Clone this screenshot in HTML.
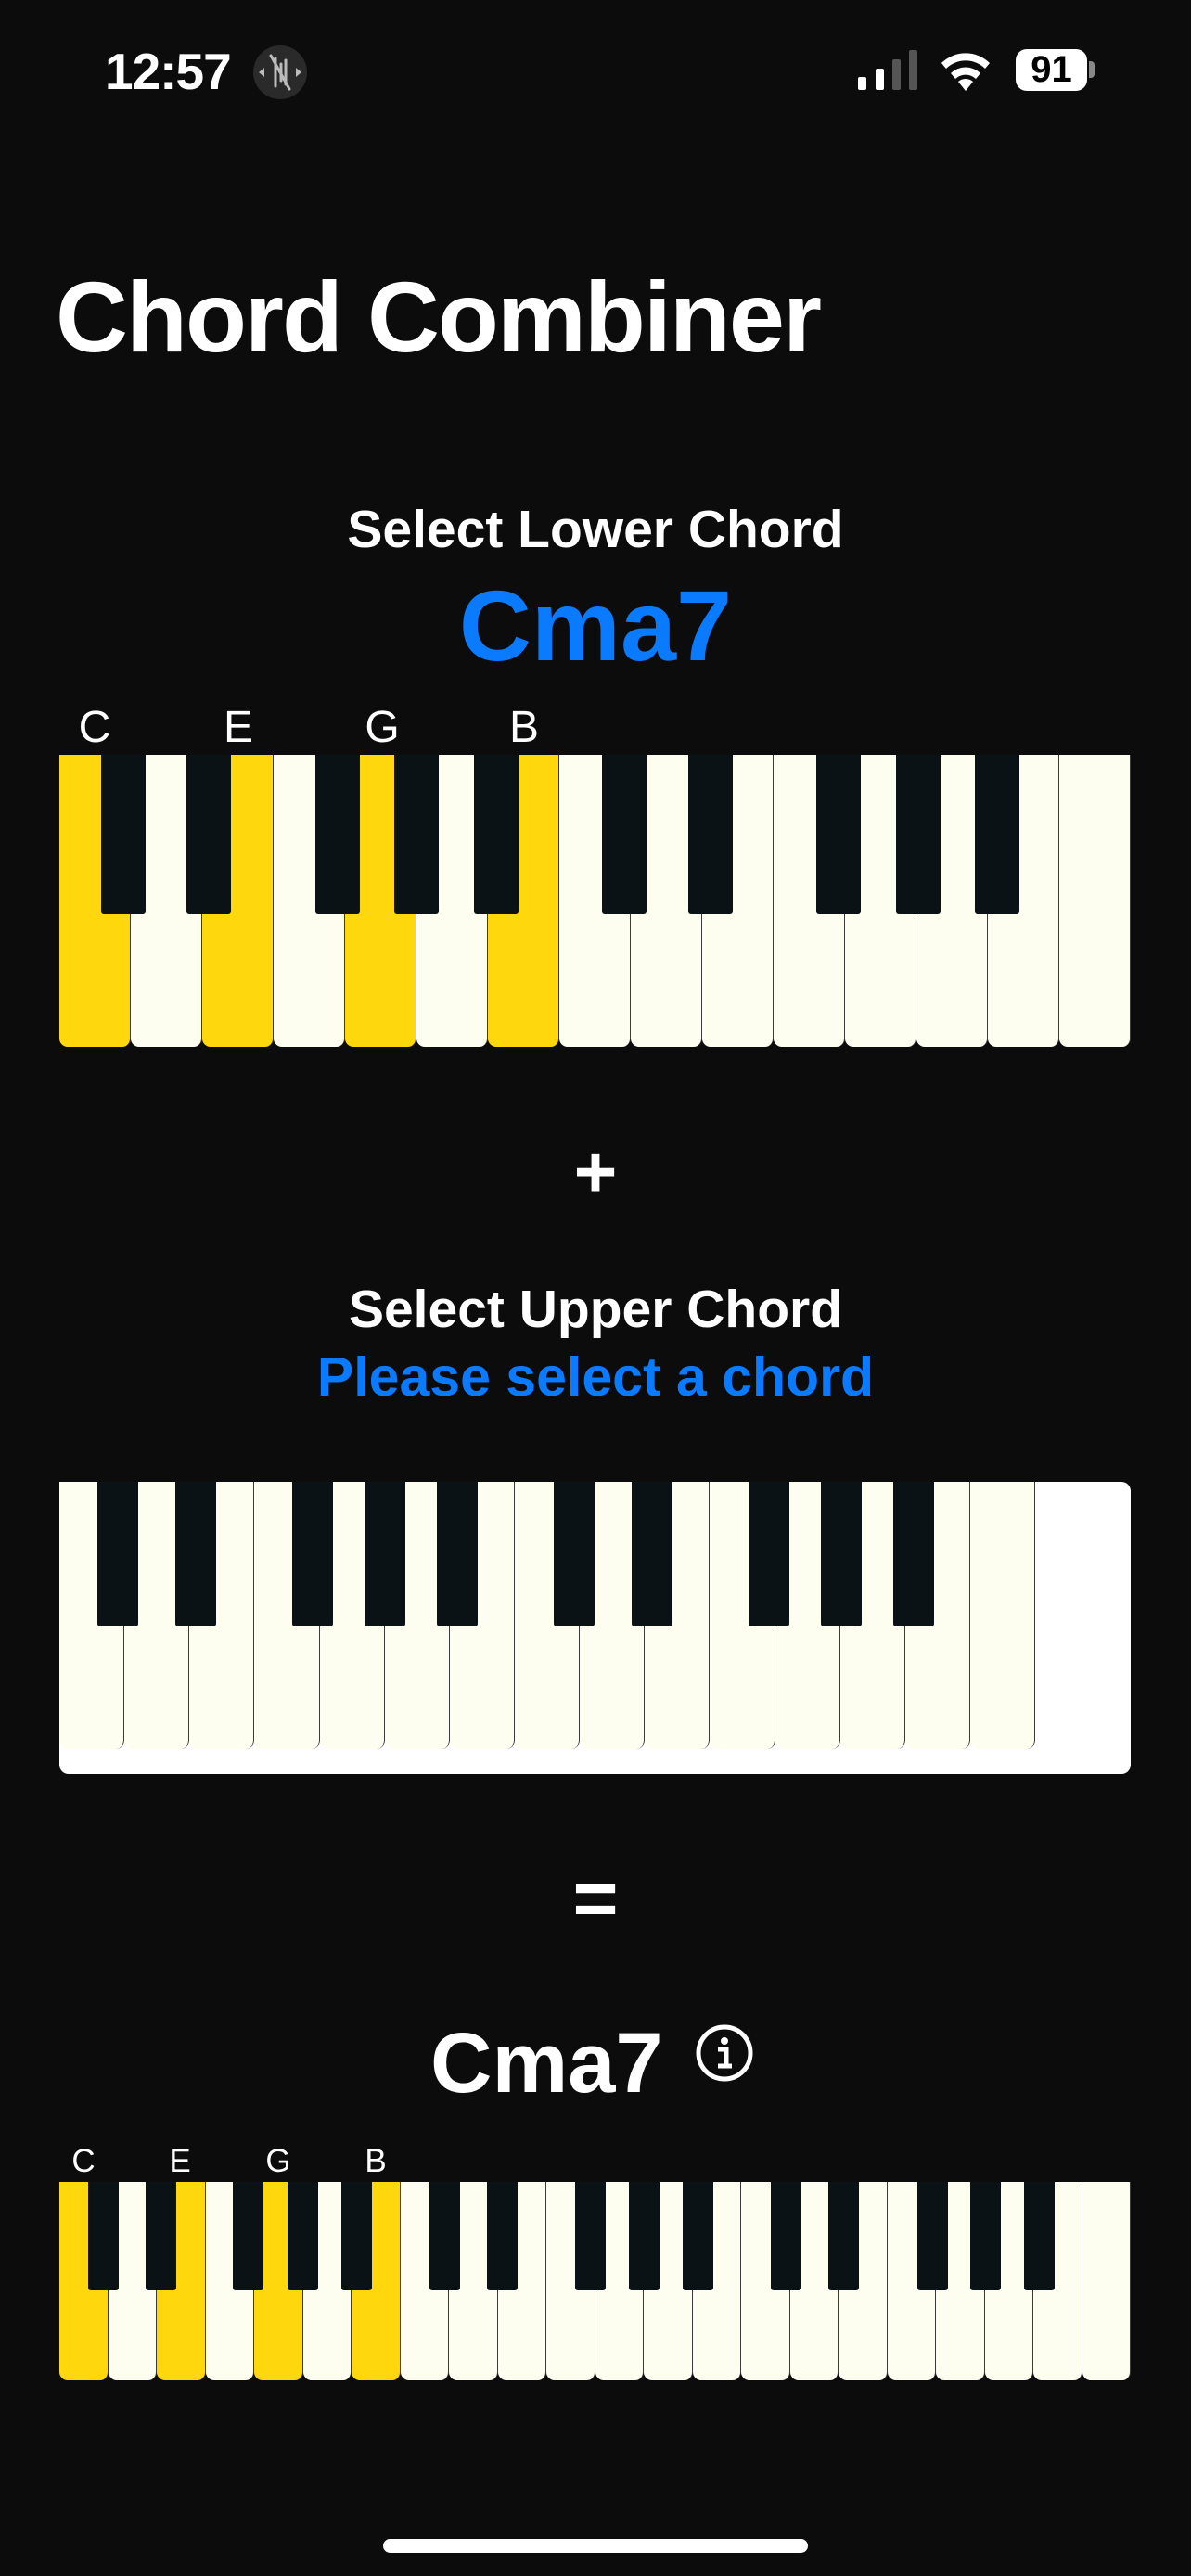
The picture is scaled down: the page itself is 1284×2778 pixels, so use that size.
<!DOCTYPE html>
<html><head><meta charset="utf-8"><style>
*{margin:0;padding:0;box-sizing:border-box}
body{width:1284px;height:2778px;background:#0c0c0c;position:relative;overflow:hidden;font-family:"Liberation Sans",sans-serif;color:#fff}
.a{position:absolute}
.c{position:absolute;left:0;width:1284px;text-align:center;font-weight:bold;line-height:1}
.kb{position:absolute;display:flex}
.w{flex:1;background:#fefef0;border-right:1.5px solid #3a3a3a;border-radius:0 0 9px 9px;height:100%}
.w:last-child{border-right:none}
.y{background:#fed70c}
.b{position:absolute;top:0;background:#0b1215;border-radius:0 0 3px 3px}
.lbl{position:absolute;transform:translateX(-50%);color:#fff;line-height:1}
</style></head><body>
<div class="a" style="left:113px;top:50px;font-size:55px;font-weight:bold;line-height:1;letter-spacing:-1px">12:57</div>
<svg class="a" style="left:273px;top:49px" width="58" height="58" viewBox="0 0 58 58"><circle cx="29" cy="29" r="29" fill="#2a2a2a"/><g stroke="#bbb" stroke-width="3" stroke-linecap="round"><line x1="24" y1="14" x2="24" y2="44"/><line x1="30" y1="20" x2="30" y2="38"/><line x1="35" y1="16" x2="35" y2="42"/><line x1="19" y1="11" x2="39" y2="47"/></g><path d="M6 29 L12 24 L12 34Z M52 29 L46 24 L46 34Z" fill="#bbb"/></svg>
<div class="a" style="left:925px;top:83px;width:9px;height:14px;background:#fff;border-radius:2px"></div>
<div class="a" style="left:944px;top:74px;width:9px;height:23px;background:#fff;border-radius:2px"></div>
<div class="a" style="left:962px;top:64px;width:9px;height:33px;background:#555;border-radius:2px"></div>
<div class="a" style="left:980px;top:54px;width:9px;height:43px;background:#555;border-radius:2px"></div>
<svg class="a" style="left:1012px;top:52px" width="58" height="46" viewBox="0 0 58 46"><path d="M29 46 L21 36 A12 12 0 0 1 37 36Z" fill="#fff"/><path d="M13 27 A23 23 0 0 1 45 27 L40 33 A16 16 0 0 0 18 33Z" fill="#fff"/><path d="M3 16 A37 37 0 0 1 55 16 L50 22 A30 30 0 0 0 8 22Z" fill="#fff"/></svg>
<div class="a" style="left:1095px;top:53px;width:77px;height:45px;background:#fff;border-radius:12px;color:#000;font-size:40px;font-weight:bold;text-align:center;line-height:45px">91</div>
<div class="a" style="left:1174px;top:66px;width:6px;height:18px;background:#888;border-radius:0 4px 4px 0"></div>

<div class="a" style="left:60px;top:288px;font-size:108px;font-weight:bold;line-height:1;letter-spacing:-2px">Chord Combiner</div>

<div class="c" style="top:543px;font-size:57px">Select Lower Chord</div>
<div class="c" style="top:621px;font-size:108px;color:#0a7aff">Cma7</div>

<div class="lbl" style="left:102px;top:761px;font-size:48px">C</div>
<div class="lbl" style="left:257px;top:761px;font-size:48px">E</div>
<div class="lbl" style="left:412px;top:761px;font-size:48px">G</div>
<div class="lbl" style="left:565px;top:761px;font-size:48px">B</div>

<div class="kb" style="left:64px;top:814px;width:1155px;height:315px">
<div class="w y"></div><div class="w"></div><div class="w y"></div><div class="w"></div><div class="w y"></div><div class="w"></div><div class="w y"></div><div class="w"></div><div class="w"></div><div class="w"></div><div class="w"></div><div class="w"></div><div class="w"></div><div class="w"></div><div class="w"></div>
<div class="b" style="left:45px;width:48px;height:172px"></div>
<div class="b" style="left:137px;width:48px;height:172px"></div>
<div class="b" style="left:276px;width:48px;height:172px"></div>
<div class="b" style="left:361px;width:48px;height:172px"></div>
<div class="b" style="left:447px;width:48px;height:172px"></div>
<div class="b" style="left:585px;width:48px;height:172px"></div>
<div class="b" style="left:678px;width:48px;height:172px"></div>
<div class="b" style="left:816px;width:48px;height:172px"></div>
<div class="b" style="left:902px;width:48px;height:172px"></div>
<div class="b" style="left:987px;width:48px;height:172px"></div>
</div>

<div class="c" style="top:1224px;font-size:80px">+</div>

<div class="c" style="top:1384px;font-size:57px">Select Upper Chord</div>
<div class="c" style="top:1456px;font-size:59px;color:#0a7aff">Please select a chord</div>

<div class="a" style="left:64px;top:1598px;width:1155px;height:315px;background:#fff;border-radius:10px"></div>
<div class="kb" style="left:64px;top:1598px;width:1052px;height:288px">
<div class="w"></div><div class="w"></div><div class="w"></div><div class="w"></div><div class="w"></div><div class="w"></div><div class="w"></div><div class="w"></div><div class="w"></div><div class="w"></div><div class="w"></div><div class="w"></div><div class="w"></div><div class="w"></div><div class="w" style="border-right:1.5px solid #3a3a3a"></div>
<div class="b" style="left:41px;width:44px;height:156px"></div>
<div class="b" style="left:125px;width:44px;height:156px"></div>
<div class="b" style="left:251px;width:44px;height:156px"></div>
<div class="b" style="left:329px;width:44px;height:156px"></div>
<div class="b" style="left:407px;width:44px;height:156px"></div>
<div class="b" style="left:533px;width:44px;height:156px"></div>
<div class="b" style="left:617px;width:44px;height:156px"></div>
<div class="b" style="left:743px;width:44px;height:156px"></div>
<div class="b" style="left:821px;width:44px;height:156px"></div>
<div class="b" style="left:899px;width:44px;height:156px"></div>
</div>

<div class="c" style="top:2005px;font-size:84px">=</div>

<div class="a" style="left:464px;top:2179px;font-size:92px;font-weight:bold;line-height:1">Cma7</div>
<svg class="a" style="left:749px;top:2182px" width="64" height="64" viewBox="0 0 64 64"><circle cx="32" cy="32" r="28" fill="none" stroke="#fff" stroke-width="5"/><circle cx="32" cy="19" r="4" fill="#fff"/><path d="M25 28 H34 V46 M25 46 H40" stroke="#fff" stroke-width="5" fill="none"/></svg>

<div class="lbl" style="left:90px;top:2313px;font-size:35px">C</div>
<div class="lbl" style="left:194px;top:2313px;font-size:35px">E</div>
<div class="lbl" style="left:300px;top:2313px;font-size:35px">G</div>
<div class="lbl" style="left:405px;top:2313px;font-size:35px">B</div>

<div class="kb" style="left:64px;top:2353px;width:1155px;height:214px">
<div class="w y"></div><div class="w"></div><div class="w y"></div><div class="w"></div><div class="w y"></div><div class="w"></div><div class="w y"></div><div class="w"></div><div class="w"></div><div class="w"></div><div class="w"></div><div class="w"></div><div class="w"></div><div class="w"></div><div class="w"></div><div class="w"></div><div class="w"></div><div class="w"></div><div class="w"></div><div class="w"></div><div class="w"></div><div class="w"></div>
<div class="b" style="left:31px;width:33px;height:117px"></div>
<div class="b" style="left:93px;width:33px;height:117px"></div>
<div class="b" style="left:187px;width:33px;height:117px"></div>
<div class="b" style="left:246px;width:33px;height:117px"></div>
<div class="b" style="left:304px;width:33px;height:117px"></div>
<div class="b" style="left:399px;width:33px;height:117px"></div>
<div class="b" style="left:461px;width:33px;height:117px"></div>
<div class="b" style="left:556px;width:33px;height:117px"></div>
<div class="b" style="left:614px;width:33px;height:117px"></div>
<div class="b" style="left:672px;width:33px;height:117px"></div>
<div class="b" style="left:767px;width:33px;height:117px"></div>
<div class="b" style="left:829px;width:33px;height:117px"></div>
<div class="b" style="left:925px;width:33px;height:117px"></div>
<div class="b" style="left:982px;width:33px;height:117px"></div>
<div class="b" style="left:1040px;width:33px;height:117px"></div>
</div>

<div class="a" style="left:413px;top:2738px;width:458px;height:15px;background:#fff;border-radius:8px"></div>
</body></html>
